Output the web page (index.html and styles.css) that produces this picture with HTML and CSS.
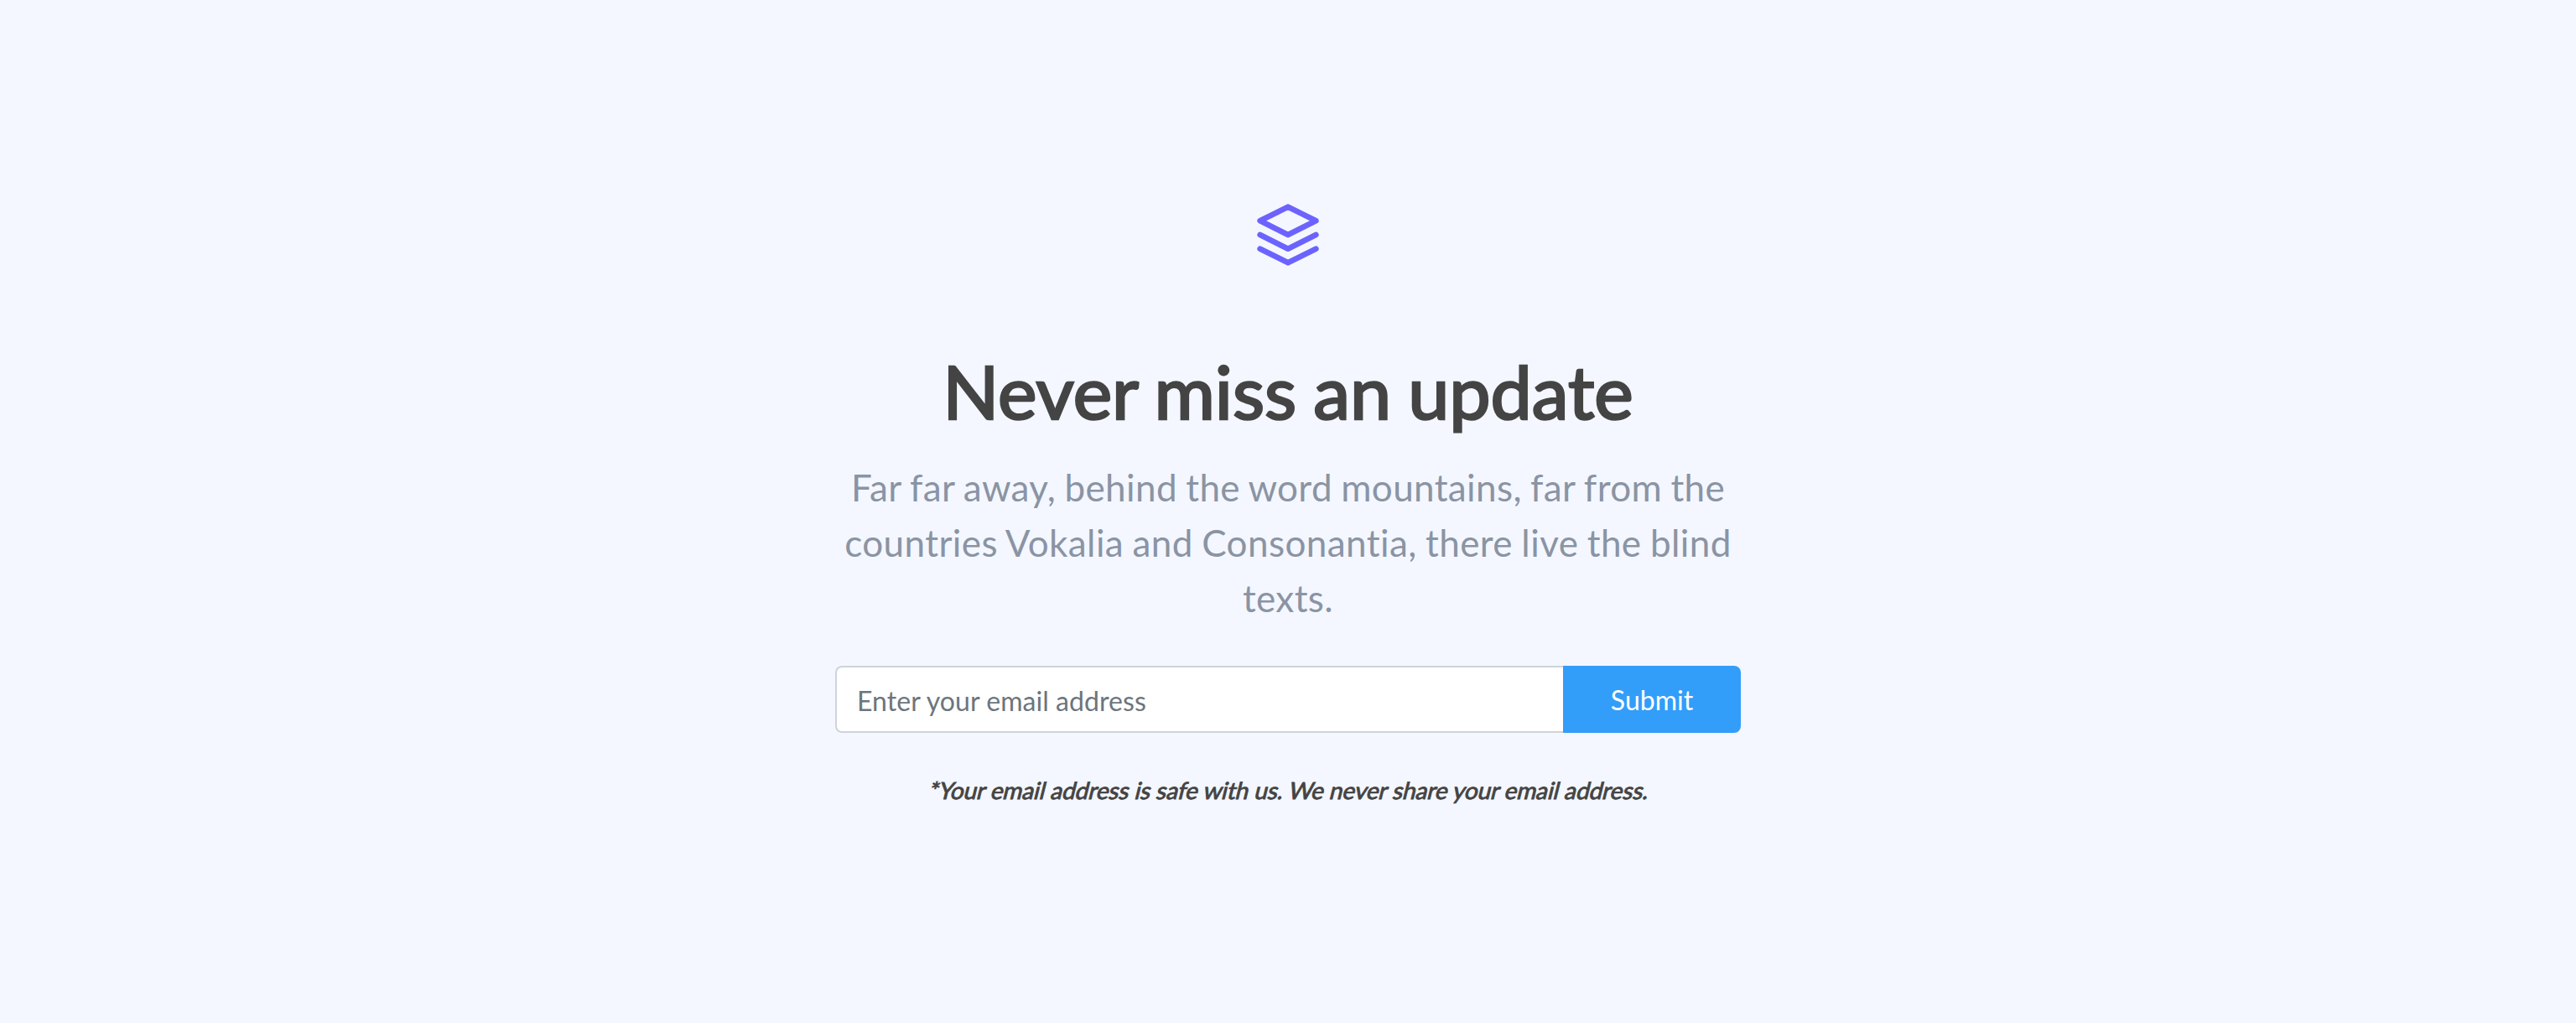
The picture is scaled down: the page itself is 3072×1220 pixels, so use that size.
FILE: index.html
```html
<!DOCTYPE html>
<html lang="en">
<head>
<meta charset="utf-8">
<title>Never miss an update</title>
<link rel="stylesheet" href="styles.css">
</head>
<body>
<main class="subscribe">
  <svg class="icon" viewBox="0 0 24 24" fill="none" stroke="currentColor" stroke-width="2" stroke-linecap="round" stroke-linejoin="round" aria-hidden="true"><path d="M12 2 2 7l10 5 10-5-10-5zM2 17l10 5 10-5M2 12l10 5 10-5"/></svg>
  <h1 class="title">Never miss an update</h1>
  <p class="lead">Far far away, behind the word mountains, far from the <span class="wide">countries Vokalia and Consonantia, there live the blind</span> texts.</p>
  <form class="form">
    <input class="field" type="email" placeholder="Enter your email address" aria-label="Email address">
    <button class="submit" type="button">Submit</button>
  </form>
  <p class="note">*Your email address is safe with us. We never share your email address.</p>
</main>
</body>
</html>
```

FILE: styles.css
```css
* { box-sizing: border-box; }
body {
  margin: 0;
  min-height: 1220px;
  background: #f4f7ff;
  color: #444;
  font-family: Lato, sans-serif;
}
.subscribe {
  display: flex;
  flex-direction: column;
  align-items: center;
  width: 1080px;
  margin: 0 auto;
  padding-top: 240px;
  text-align: center;
}
.icon { width: 80px; height: 80px; color: #6c63ff; }
.title {
  margin: 93px 0 0;
  font-size: 88px;
  line-height: 106px;
  font-weight: 400;
  letter-spacing: -0.05px;
  word-spacing: -2.2px;
  -webkit-text-stroke: 2.6px #444;
  white-space: nowrap;
}
.lead {
  margin: 29px 0 0;
  color: #8a94a4;
  font-size: 44px;
  line-height: 66px;
  letter-spacing: 0.38px;
  word-spacing: -1.3px;
}
.wide { letter-spacing: 0.42px; }
.form { display: flex; width: 1080px; height: 80px; margin: 48px 0 0; }
.field {
  flex: 1;
  min-width: 0;
  padding: 3px 24px 0;
  border: 2px solid #ced4da;
  border-right: 0;
  border-radius: 8px 0 0 8px;
  background: #fff;
  font: 32px Lato, sans-serif;
  letter-spacing: 0.06px;
}
.field::placeholder { color: #6c757d; opacity: 1; }
.submit {
  width: 212px;
  border: 0;
  border-radius: 0 8px 8px 0;
  background: #339dfa;
  color: #fff;
  font: 32px Lato, sans-serif;
}
/* The upright face is slanted, which keeps its wider letterforms. */
.note {
  margin: 51px 0 0;
  padding-left: 3px;
  font-size: 28px;
  line-height: 34px;
  letter-spacing: -0.11px;
  transform: skewX(-14deg);
  -webkit-text-stroke: 0.9px #444;
  white-space: nowrap;
}
```
